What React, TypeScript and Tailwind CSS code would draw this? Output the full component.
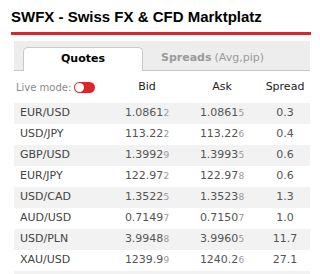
const rows: [string, string, string, string, string, string][] = [
  ['EUR/USD', '1.0861', '2', '1.0861', '5', '0.3'],
  ['USD/JPY', '113.22', '2', '113.22', '6', '0.4'],
  ['GBP/USD', '1.3992', '9', '1.3993', '5', '0.6'],
  ['EUR/JPY', '122.97', '2', '122.97', '8', '0.6'],
  ['USD/CAD', '1.3522', '5', '1.3523', '8', '1.3'],
  ['AUD/USD', '0.7149', '7', '0.7150', '7', '1.0'],
  ['USD/PLN', '3.9948', '8', '3.9960', '5', '11.7'],
  ['XAU/USD', '1239.9', '9', '1240.2', '6', '27.1'],
]

const Price = ({ main, pip }: { main: string; pip: string }) => (
  <span>
    {main}
    <span className="text-[9px] text-[#999]">{pip}</span>
  </span>
)

export default function App() {
  return (
    <div className="h-[274px] w-[320px] overflow-hidden bg-white font-['DejaVu_Sans',sans-serif]">
      <div className="px-[11px] pt-[9px]">
        <h1 className="font-['Liberation_Sans',Arial,sans-serif] text-[15px] font-bold leading-[16px] text-black">
          SWFX - Swiss FX &amp; CFD Marktplatz
        </h1>
        <div className="mt-[7px] h-[3px] w-[300px] bg-[#d9262b]" />
      </div>

      <div className="ml-[14px] w-[296px]">
        <div className="mt-[6px] flex h-[30px] items-end border-b border-[#c8c8c8] bg-[#ededed] pl-[9px]">
          <div className="relative -mb-px flex h-[24px] w-[120px] items-center justify-center rounded-t-[5px] border border-b-0 border-[#c8c8c8] bg-white text-[11px] font-bold text-black">
            Quotes
          </div>
          <div className="flex h-[24px] flex-1 items-center pl-[18px] text-[11px] text-[#9a9a9a]">
            <span className="font-bold">Spreads</span>
            <span className="ml-[3px]">(Avg,pip)</span>
          </div>
        </div>

        <div className="grid h-[32px] grid-cols-[100px_66px_84px_46px] items-center text-[11px] text-[#222]">
          <div className="flex items-center pl-[2px] text-[10px] text-[#8a8a8a]">
            Live mode:
            <span className="ml-[3px] flex h-[11px] w-[21px] items-center rounded-full bg-[#e0242b] pl-px">
              <span className="h-[9px] w-[9px] rounded-full bg-white" />
            </span>
          </div>
          <div className="text-center">Bid</div>
          <div className="text-center">Ask</div>
          <div className="pr-[4px] text-center">Spread</div>
        </div>

        {rows.map(([pair, bid, bidPip, ask, askPip, spread], i) => (
          <div
            key={pair}
            className={`grid h-[21px] grid-cols-[100px_66px_84px_46px] items-center text-[11px] text-[#555] ${
              i % 2 === 0 ? 'bg-[#f2f2f2]' : 'bg-white'
            }`}
          >
            <div className="pl-[6px] text-[#444]">{pair}</div>
            <div className="text-center">
              <Price main={bid} pip={bidPip} />
            </div>
            <div className="text-center">
              <Price main={ask} pip={askPip} />
            </div>
            <div className="pr-[4px] text-center">{spread}</div>
          </div>
        ))}
        <div className="h-[21px] bg-[#f2f2f2]" />
      </div>
    </div>
  )
}
